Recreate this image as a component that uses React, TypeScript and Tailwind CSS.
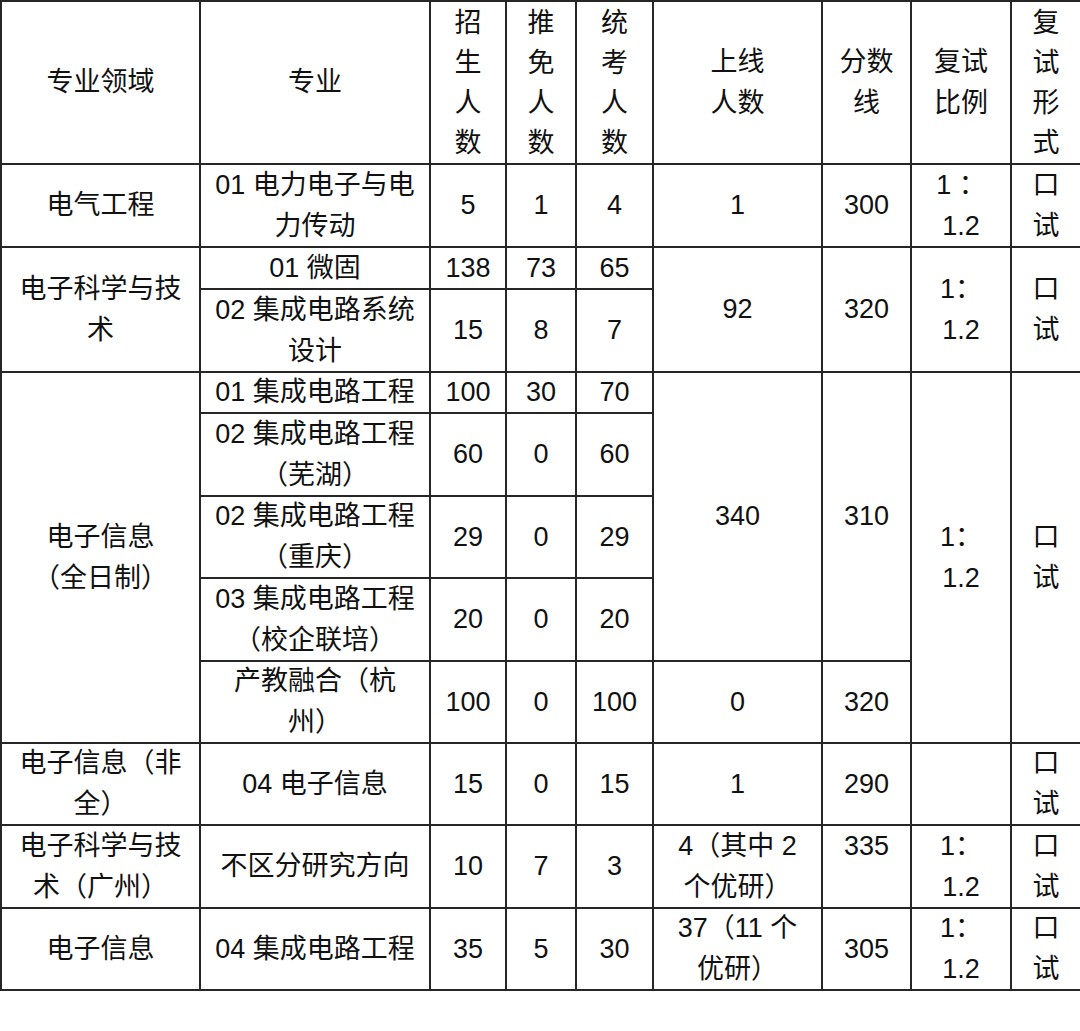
import React from "react";

type CellProps = {
  lines: string[];
  rowSpan?: number;
  top?: boolean;
  tight?: boolean;
};

function Cell({ lines, rowSpan, top, tight }: CellProps) {
  return (
    <td
      rowSpan={rowSpan}
      className={`border-2 border-[#262626] p-0 text-center whitespace-nowrap ${top ? "align-top" : "align-middle"}`}
    >
      <div className={top ? "" : "-my-[1px]"}>
        {lines.map((l, i) => (
          <div
            key={i}
            className={tight ? "h-[40px] leading-[40px]" : "h-[41px] leading-[41px]"}
          >
            {l}
          </div>
        ))}
      </div>
    </td>
  );
}

export default function App() {
  return (
    <div
      className="w-[1080px] h-[1031px] bg-white text-[#111] text-[27px]"
      style={{ fontFamily: '"Liberation Sans", "Noto Sans CJK SC", sans-serif' }}
    >
      <table className="border-collapse table-fixed w-[1080px]">
        <colgroup>
          <col className="w-[199px]" />
          <col className="w-[230px]" />
          <col className="w-[76px]" />
          <col className="w-[70px]" />
          <col className="w-[77px]" />
          <col className="w-[169px]" />
          <col className="w-[89px]" />
          <col className="w-[100px]" />
          <col className="w-[70px]" />
        </colgroup>
        <tbody>
          <tr className="h-[163px]">
            <Cell lines={["专业领域"]} />
            <Cell lines={["专业"]} />
            <Cell tight lines={["招", "生", "人", "数"]} />
            <Cell tight lines={["推", "免", "人", "数"]} />
            <Cell tight lines={["统", "考", "人", "数"]} />
            <Cell lines={["上线", "人数"]} />
            <Cell lines={["分数", "线"]} />
            <Cell lines={["复试", "比例"]} />
            <Cell tight lines={["复", "试", "形", "式"]} />
          </tr>
          <tr className="h-[83px]">
            <Cell lines={["电气工程"]} />
            <Cell lines={["01 电力电子与电", "力传动"]} />
            <Cell lines={["5"]} />
            <Cell lines={["1"]} />
            <Cell lines={["4"]} />
            <Cell lines={["1"]} />
            <Cell lines={["300"]} />
            <Cell lines={["1 ：", "1.2"]} />
            <Cell lines={["口", "试"]} />
          </tr>
          <tr className="h-[42px]">
            <Cell rowSpan={2} lines={["电子科学与技", "术"]} />
            <Cell lines={["01 微固"]} />
            <Cell lines={["138"]} />
            <Cell lines={["73"]} />
            <Cell lines={["65"]} />
            <Cell rowSpan={2} lines={["92"]} />
            <Cell rowSpan={2} lines={["320"]} />
            <Cell rowSpan={2} lines={["1：", "1.2"]} />
            <Cell rowSpan={2} lines={["口", "试"]} />
          </tr>
          <tr className="h-[83px]">
            <Cell lines={["02 集成电路系统", "设计"]} />
            <Cell lines={["15"]} />
            <Cell lines={["8"]} />
            <Cell lines={["7"]} />
          </tr>
          <tr className="h-[41px]">
            <Cell rowSpan={5} lines={["电子信息", "（全日制）"]} />
            <Cell lines={["01 集成电路工程"]} />
            <Cell lines={["100"]} />
            <Cell lines={["30"]} />
            <Cell lines={["70"]} />
            <Cell rowSpan={4} lines={["340"]} />
            <Cell rowSpan={4} lines={["310"]} />
            <Cell rowSpan={5} lines={["1：", "1.2"]} />
            <Cell rowSpan={5} lines={["口", "试"]} />
          </tr>
          <tr className="h-[83px]">
            <Cell lines={["02 集成电路工程", "（芜湖）"]} />
            <Cell lines={["60"]} />
            <Cell lines={["0"]} />
            <Cell lines={["60"]} />
          </tr>
          <tr className="h-[82px]">
            <Cell lines={["02 集成电路工程", "（重庆）"]} />
            <Cell lines={["29"]} />
            <Cell lines={["0"]} />
            <Cell lines={["29"]} />
          </tr>
          <tr className="h-[83px]">
            <Cell lines={["03 集成电路工程", "（校企联培）"]} />
            <Cell lines={["20"]} />
            <Cell lines={["0"]} />
            <Cell lines={["20"]} />
          </tr>
          <tr className="h-[82px]">
            <Cell lines={["产教融合（杭", "州）"]} />
            <Cell lines={["100"]} />
            <Cell lines={["0"]} />
            <Cell lines={["100"]} />
            <Cell lines={["0"]} />
            <Cell lines={["320"]} />
          </tr>
          <tr className="h-[82px]">
            <Cell lines={["电子信息（非", "全）"]} />
            <Cell lines={["04 电子信息"]} />
            <Cell lines={["15"]} />
            <Cell lines={["0"]} />
            <Cell lines={["15"]} />
            <Cell lines={["1"]} />
            <Cell lines={["290"]} />
            <Cell lines={[""]} />
            <Cell lines={["口", "试"]} />
          </tr>
          <tr className="h-[83px]">
            <Cell lines={["电子科学与技", "术（广州）"]} />
            <Cell lines={["不区分研究方向"]} />
            <Cell lines={["10"]} />
            <Cell lines={["7"]} />
            <Cell lines={["3"]} />
            <Cell lines={["4（其中 2", "个优研）"]} />
            <Cell top lines={["335"]} />
            <Cell lines={["1：", "1.2"]} />
            <Cell lines={["口", "试"]} />
          </tr>
          <tr className="h-[82px]">
            <Cell lines={["电子信息"]} />
            <Cell lines={["04 集成电路工程"]} />
            <Cell lines={["35"]} />
            <Cell lines={["5"]} />
            <Cell lines={["30"]} />
            <Cell lines={["37（11 个", "优研）"]} />
            <Cell lines={["305"]} />
            <Cell lines={["1：", "1.2"]} />
            <Cell lines={["口", "试"]} />
          </tr>
        </tbody>
      </table>
    </div>
  );
}
